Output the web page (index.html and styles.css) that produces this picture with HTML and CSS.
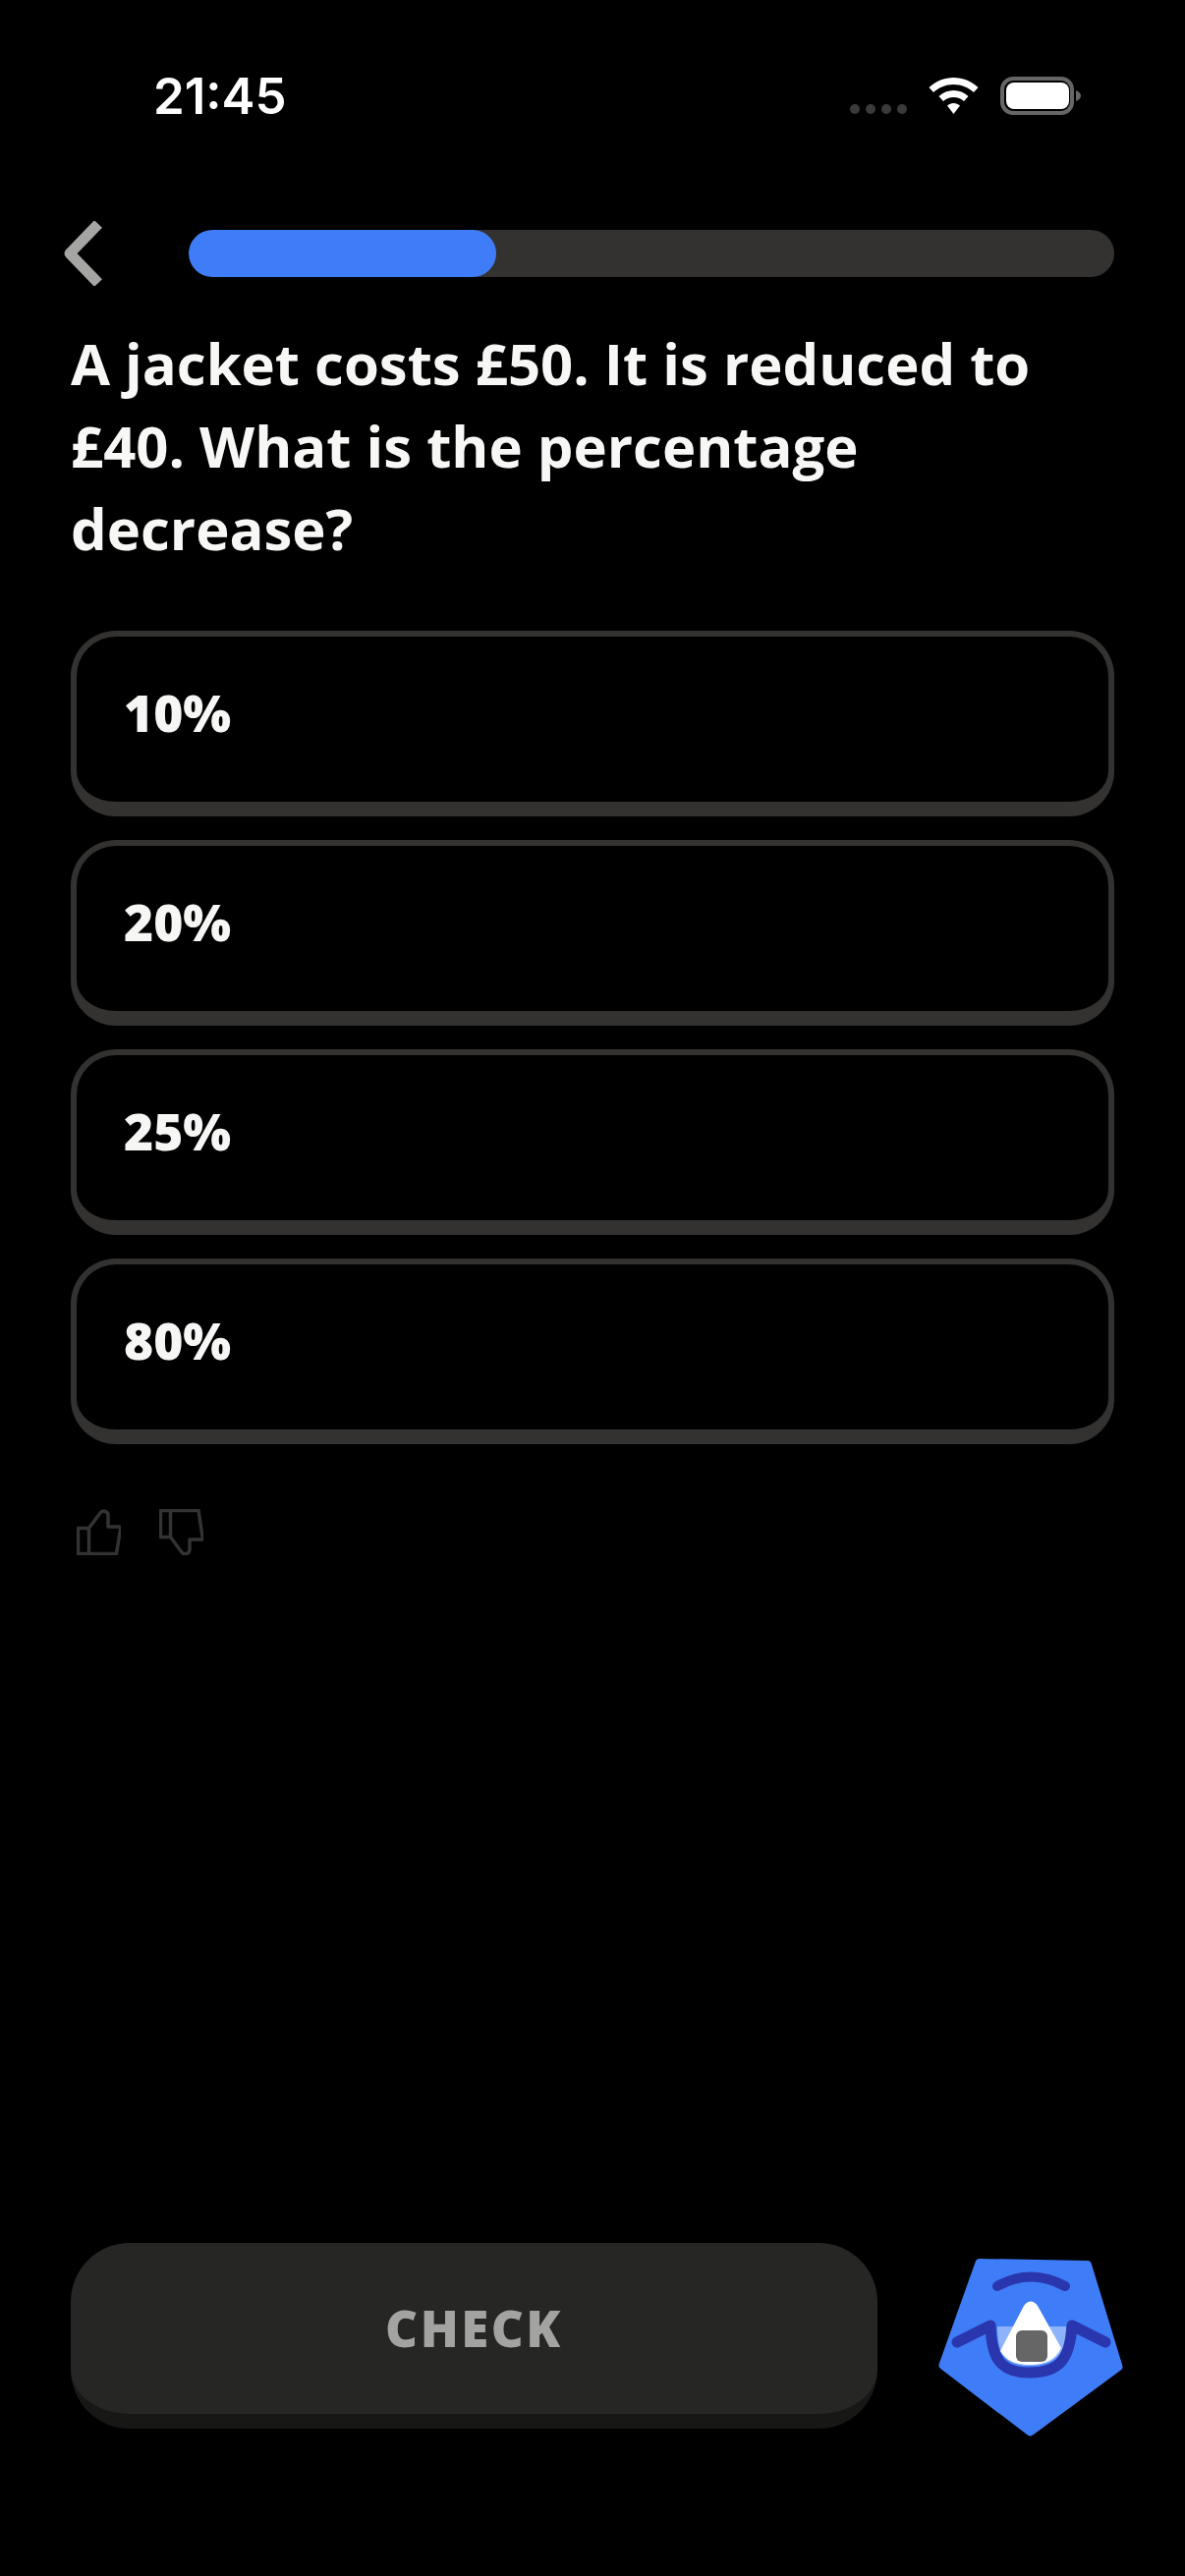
FILE: index.html
```html
<!DOCTYPE html>
<html lang="en">
<head>
<meta charset="utf-8">
<title>Question</title>
<link rel="stylesheet" href="styles.css">
</head>
<body>
<main class="screen">
  <header class="status">
    <span class="time">21:45</span>
    <div class="status-icons">
      <div class="signal"><i></i><i></i><i></i><i></i></div>
      <svg class="wifi" viewBox="0 0 51 37"><path d="M25.500 0C16 0 7.500 3.500 0.500 10L5 15C10.500 10 17.500 7 25.500 7C33.500 7 40.500 10 46 15L50.500 10C43.500 3.500 35 0 25.500 0Z" fill="#fff"/><path d="M25.500 13C20 13 14.500 15 10.500 19L15 24C18 21.500 21.500 20 25.500 20C29.500 20 33 21.500 36 24L40.500 19C36.500 15 31 13 25.500 13Z" fill="#fff"/><path d="M25.500 26C23 26 21 27 19 28.500L25.500 37L32 28.500C30 27 28 26 25.500 26Z" fill="#fff"/></svg>
      <svg class="battery" viewBox="0 0 82 39"><rect x="2" y="2" width="71" height="35" rx="11" fill="none" stroke="#666" stroke-width="4"/><rect x="6" y="6" width="64" height="27" rx="8" fill="#fff"/><path d="M77 14C80 15 82 17 82 19.500C82 22 80 24 77 25Z" fill="#666"/></svg>
    </div>
  </header>

  <section class="topbar">
    <svg class="back" viewBox="0 0 39 66"><path d="M35 3L6 33L35 63" fill="none" stroke="#a5a5a3" stroke-width="11" stroke-linejoin="round"/></svg>
    <div class="track"><div class="fill" style="width:33.2%"></div></div>
  </section>

  <h1 class="question">A jacket costs £50. It is reduced to £40. What is the percentage decrease?</h1>

  <div class="options">
    <button class="option">10%</button>
    <button class="option">20%</button>
    <button class="option">25%</button>
    <button class="option">80%</button>
  </div>

  <div class="feedback">
    <svg class="thumb" viewBox="0 0 45 47"><path d="M1.500 19.500H12.500V45.500H1.500Z M12.500 19.500L24 4C26 1 31.500 1.500 32 6V18H45L40.500 45.500H12.500" fill="none" stroke="#333331" stroke-width="3.500" stroke-linejoin="round"/></svg>
    <svg class="thumb" viewBox="0 0 45 47"><path d="M1.500 1.500H11.500V28.500H1.500Z M11.500 1.500H40L44.500 31H31V41C31 46 25 47 23 44L11.500 28.500" fill="none" stroke="#333331" stroke-width="3.500" stroke-linejoin="round"/></svg>
  </div>

  <footer class="bottom">
    <button class="check">CHECK</button>
    <svg class="mascot" viewBox="0 0 230 220">
      <path d="M67 23.500L176.500 25.500L208 129L118.500 195L30 127.500Z" fill="#3f7cf7" stroke="#3f7cf7" stroke-width="9" stroke-linejoin="round"/>
      <path d="M85 88H155C155 115 145 128 118 128C92 128 85 115 85 88Z" fill="#8fb3fb"/>
      <path d="M112 67C116 61 122 61 126 67L150 110C144 122 134 127 118 127C103 127 93 122 88 113Z" fill="#fff"/>
      <rect x="104" y="92" width="32" height="32" rx="6" fill="#666"/>
      <path d="M85 47Q119 28 154 47" fill="none" stroke="#2a36ad" stroke-width="10" stroke-linecap="round"/>
      <path d="M44 104L78 87C79 118 86 135 118 135C151 135 159 118 161 87L195 104" fill="none" stroke="#2a36ad" stroke-width="11" stroke-linecap="round" stroke-linejoin="round"/>
    </svg>
  </footer>
</main>
</body>
</html>
```
FILE: styles.css
```css
* { box-sizing: border-box; }
html, body { margin: 0; background: #000; }
.screen {
  width: 1206px;
  height: 2622px;
  padding: 0 72px;
  display: flex;
  flex-direction: column;
  font-family: "Open Sans", "Noto Sans", sans-serif;
  color: #f6f6f5;
  background: #000;
}
.status {
  height: 117px;
  padding: 78px 34px 0 84px;
  display: flex;
  justify-content: space-between;
  align-items: flex-start;
}
.time {
  font-family: "Inter", sans-serif;
  font-size: 51px;
  font-weight: 600;
  line-height: 39px;
  color: #fff;
}
.status-icons { display: flex; align-items: flex-end; }
.signal { display: flex; gap: 6px; margin-bottom: 1px; margin-right: 22px; }
.signal i { width: 10px; height: 10px; border-radius: 50%; background: #3a3a3a; }
.wifi { width: 51px; height: 37px; margin-bottom: 1px; margin-right: 22px; }
.battery { width: 82px; height: 39px; }
.topbar {
  margin-top: 108px;
  display: flex;
  align-items: center;
  margin-left: -7px;
  height: 66px;
}
.back { width: 39px; height: 66px; margin-right: 88px; flex: none; }
.track { flex: 1; height: 48px; background: #333230; border-radius: 24px; overflow: hidden; }
.fill { height: 100%; background: #3f7cf7; border-radius: 24px; }
.question {
  margin: 37px 0 0;
  max-width: 1000px;
  font-size: 58px;
  font-weight: 700;
  line-height: 84px;
  color: #f7f7f5;
}
.options { margin-top: 62px; display: flex; flex-direction: column; gap: 24px; }
.option {
  height: 189px;
  background: #000;
  border: 6px solid #333230;
  border-bottom-width: 15px;
  border-radius: 46px;
  padding: 0 0 14px 48px;
  text-align: left;
  font-family: inherit;
  font-size: 51.500px;
  font-weight: 800;
  color: #f6f6f5;
}
.feedback { margin-top: 66px; padding-left: 6px; display: flex; gap: 39px; }
.thumb { width: 45px; height: 47px; }
.bottom {
  margin-top: auto;
  margin-bottom: 122px;
  margin-right: -26px;
  display: flex;
  align-items: flex-start;
}
.check {
  flex: none;
  width: 821px;
  height: 189px;
  padding-bottom: 3px;
  background: #262624;
  border: 0;
  border-bottom: 15px solid #171715;
  border-radius: 60px;
  font-family: inherit;
  font-size: 51px;
  font-weight: 800;
  letter-spacing: 2.500px;
  color: #a3a3a1;
}
.mascot { width: 230px; height: 220px; margin: -3px 0 0 37px; flex: none; }
```
